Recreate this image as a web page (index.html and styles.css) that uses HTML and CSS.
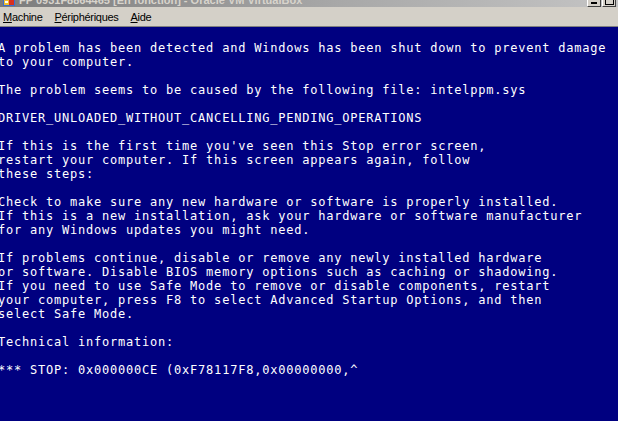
FILE: index.html
```html
<!DOCTYPE html>
<html>
<head>
<meta charset="utf-8">
<link rel="stylesheet" href="styles.css">
</head>
<body>
<div class="window">
  <div class="titlebar">
    <div class="title-left">
      <svg class="app-icon" width="14" height="14" viewBox="0 0 14 14">
        <rect x="1" y="1" width="12" height="12" fill="#3a6fd0"/>
        <rect x="2" y="6" width="5" height="6" fill="#f0c030"/>
        <rect x="7" y="6" width="5" height="6" fill="#d83020"/>
        <rect x="3" y="8" width="3" height="2" fill="#ffffff"/>
      </svg>
      <span class="title-text">FP 0931F8864465 [En fonction] - Oracle VM VirtualBox</span>
    </div>
    <div class="title-buttons">
      <div class="tbtn"><span class="min-glyph"></span></div>
      <div class="tbtn"><span class="max-glyph"></span></div>
    </div>
  </div>
  <div class="menubar">
    <span class="menu-item"><u>M</u>achine</span>
    <span class="menu-item"><u>P</u>ériphériques</span>
    <span class="menu-item"><u>A</u>ide</span>
  </div>
  <div class="screen">
<pre class="bsod">A problem has been detected and Windows has been shut down to prevent damage
to your computer.

The problem seems to be caused by the following file: intelppm.sys

DRIVER_UNLOADED_WITHOUT_CANCELLING_PENDING_OPERATIONS

If this is the first time you've seen this Stop error screen,
restart your computer. If this screen appears again, follow
these steps:

Check to make sure any new hardware or software is properly installed.
If this is a new installation, ask your hardware or software manufacturer
for any Windows updates you might need.

If problems continue, disable or remove any newly installed hardware
or software. Disable BIOS memory options such as caching or shadowing.
If you need to use Safe Mode to remove or disable components, restart
your computer, press F8 to select Advanced Startup Options, and then
select Safe Mode.

Technical information:

*** STOP: 0x000000CE (0xF78117F8,0x00000000,^</pre>
  </div>
</div>
</body>
</html>
```

FILE: styles.css
```css
html, body {
  margin: 0;
  padding: 0;
  width: 618px;
  height: 421px;
  overflow: hidden;
  background: #000080;
}

.window {
  display: flex;
  flex-direction: column;
  width: 618px;
  height: 421px;
}

.titlebar {
  height: 7px;
  overflow: hidden;
  display: flex;
  justify-content: space-between;
  align-items: flex-end;
  background: linear-gradient(to right, #7c7c7c 0%, #a8a8a8 55%, #c4c4c4 100%);
}

.title-left {
  display: flex;
  align-items: flex-end;
  height: 7px;
  padding-left: 2px;
  gap: 3px;
}

.app-icon {
  flex: none;
}

.title-text {
  font-family: "Liberation Sans", Arial, sans-serif;
  font-weight: bold;
  font-size: 11px;
  line-height: 11px;
  color: #d8d4cc;
  white-space: nowrap;
  margin-bottom: 1px;
}

.title-buttons {
  display: flex;
  gap: 1px;
  padding-right: 2px;
  height: 7px;
  align-items: flex-end;
}

.tbtn {
  width: 14px;
  height: 12px;
  box-sizing: border-box;
  background: #d4d0c8;
  border: 1px solid;
  border-color: #ffffff #404040 #404040 #ffffff;
  position: relative;
}

.min-glyph {
  position: absolute;
  left: 3px;
  bottom: 2px;
  width: 6px;
  height: 2px;
  background: #000;
}

.max-glyph {
  position: absolute;
  left: 2px;
  bottom: 1px;
  width: 9px;
  height: 8px;
  box-sizing: border-box;
  border: 1px solid #000;
  border-top-width: 2px;
}

.menubar {
  height: 19px;
  background: #d4d0c8;
  border-bottom: 1px solid #808080;
  display: flex;
  align-items: center;
  padding-left: 3px;
  gap: 12px;
  font-family: "Liberation Sans", Arial, sans-serif;
  font-size: 11px;
  letter-spacing: -0.3px;
  color: #000;
}

.menu-item u {
  text-decoration: underline;
  text-underline-offset: 1px;
}

.screen {
  flex: 1;
  background: #000080;
  overflow: hidden;
  padding-top: 14px;
}

.bsod {
  margin: 0 0 0 -2px;
  font-family: "DejaVu Sans Mono", monospace;
  font-size: 12px;
  letter-spacing: 0.78px;
  line-height: 14px;
  color: #ffffff;
  white-space: pre;
}
```
